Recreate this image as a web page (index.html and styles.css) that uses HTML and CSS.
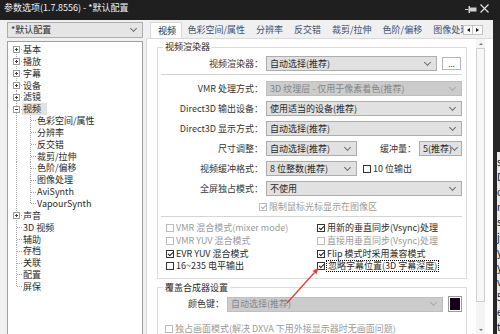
FILE: index.html
```html
<!DOCTYPE html>
<html>
<head>
  <meta charset="utf-8">
  <title>参数选项</title>
  <link rel="stylesheet" href="styles.css">
</head>
<body>
  <div class="titlebar">
    <span class="title">参数选项(1.7.8556) - *默认配置</span>
    <svg class="pin" width="12" height="8" viewBox="0 0 12 8">
      <path d="M0 4.5H3.5" stroke="#d0d0d0" stroke-width="1"/>
      <rect x="3.5" y="1" width="1.5" height="7" fill="#d0d0d0"/>
      <rect x="5" y="2.5" width="6.5" height="4" fill="#d0d0d0"/>
    </svg>
    <svg class="close" width="9" height="9" viewBox="0 0 9 9">
      <path d="M0.5 0.5L8.5 8.5M8.5 0.5L0.5 8.5" stroke="#e0e0e0" stroke-width="1.2"/>
    </svg>
  </div>

  <div class="main">
    <!-- profile list + category tree -->
    <div class="sidebar">
      <div class="combo profile">*默认配置</div>
      <div class="tree">
        <div class="node"><i class="g top"><b class="exp"></b></i>基本</div>
        <div class="node"><i class="g mid"><b class="exp"></b></i>播放</div>
        <div class="node"><i class="g mid"><b class="exp"></b></i>字幕</div>
        <div class="node"><i class="g mid"><b class="exp"></b></i>设备</div>
        <div class="node"><i class="g mid"><b class="exp"></b></i>滤镜</div>
        <div class="node"><i class="g mid"><b class="exp open"></b></i><span class="sel">视频</span></div>
        <div class="node"><i class="g pipe"></i><i class="g mid"></i>色彩空间/属性</div>
        <div class="node"><i class="g pipe"></i><i class="g mid"></i>分辨率</div>
        <div class="node"><i class="g pipe"></i><i class="g mid"></i>反交错</div>
        <div class="node"><i class="g pipe"></i><i class="g mid"></i>裁剪/拉伸</div>
        <div class="node"><i class="g pipe"></i><i class="g mid"></i>色阶/偏移</div>
        <div class="node"><i class="g pipe"></i><i class="g mid"></i>图像处理</div>
        <div class="node"><i class="g pipe"></i><i class="g mid"></i>AviSynth</div>
        <div class="node"><i class="g pipe"></i><i class="g end"></i>VapourSynth</div>
        <div class="node"><i class="g mid"><b class="exp"></b></i>声音</div>
        <div class="node"><i class="g mid"></i>3D 视频</div>
        <div class="node"><i class="g mid"></i>辅助</div>
        <div class="node"><i class="g mid"></i>存档</div>
        <div class="node"><i class="g mid"></i>关联</div>
        <div class="node"><i class="g mid"></i>配置</div>
        <div class="node"><i class="g end"></i>屏保</div>
      </div>
    </div>

    <!-- tab control -->
    <div class="pages">
      <div class="tabs">
        <div class="tab-strip">
          <span class="tab active">视频</span>
          <span class="tab">色彩空间/属性</span>
          <span class="tab">分辨率</span>
          <span class="tab">反交错</span>
          <span class="tab">裁剪/拉伸</span>
          <span class="tab">色阶/偏移</span>
          <span class="tab">图像处理</span>
        </div>
        <div class="tab-arrows">
          <span class="tab-arrow left"></span>
          <span class="tab-arrow right"></span>
        </div>
      </div>

      <div class="page">
        <div class="page-body">
          <fieldset class="group">
            <legend>视频渲染器</legend>
            <div class="row first">
              <span class="lbl">视频渲染器：</span>
              <span class="combo w-main">自动选择(推荐)</span>
              <span class="dots">...</span>
            </div>
            <div class="sep"></div>
            <div class="row">
              <span class="lbl">VMR 处理方式：</span>
              <span class="combo off w-full">3D 纹理层 - 仅用于像素着色(推荐)</span>
            </div>
            <div class="row">
              <span class="lbl">Direct3D 输出设备：</span>
              <span class="combo w-full">使用适当的设备(推荐)</span>
            </div>
            <div class="row">
              <span class="lbl">Direct3D 显示方式：</span>
              <span class="combo w-full">自动选择(推荐)</span>
            </div>
            <div class="row">
              <span class="lbl">尺寸调整：</span>
              <span class="combo w-short">自动选择(推荐)</span>
              <span class="lbl2">缓冲量：</span>
              <span class="combo w-tiny">5(推荐)</span>
            </div>
            <div class="row">
              <span class="lbl">视频缓冲格式：</span>
              <span class="combo w-short">8 位整数(推荐)</span>
              <span class="chk inline"><i class="box"></i>10 位输出</span>
            </div>
            <div class="row">
              <span class="lbl">全屏独占模式：</span>
              <span class="combo w-full">不使用</span>
            </div>
            <div class="chk off limit"><i class="box on"></i>限制鼠标光标显示在图像区</div>
            <div class="sep low"></div>
            <div class="opts">
              <div class="chk off"><i class="box"></i>VMR 混合模式(mixer mode)</div>
              <div class="chk"><i class="box on"></i>用新的垂直同步(Vsync)处理</div>
              <div class="chk off"><i class="box"></i>VMR YUV 混合模式</div>
              <div class="chk off"><i class="box"></i>直接用垂直同步(Vsync)处理</div>
              <div class="chk"><i class="box on"></i>EVR YUV 混合模式</div>
              <div class="chk"><i class="box on"></i>Flip 模式时采用兼容模式</div>
              <div class="chk"><i class="box"></i>16~235 电平输出</div>
              <div class="chk"><i class="box on"></i><span class="focus">忽略字幕位置(3D 字幕深度)</span></div>
            </div>
          </fieldset>

          <fieldset class="group">
            <legend>覆盖合成器设置</legend>
            <div class="row first color-row">
              <span class="lbl short">颜色键：</span>
              <span class="combo off w-key">自动选择(推荐)</span>
              <span class="swatch"></span>
            </div>
            <div class="chk off exclusive"><i class="box"></i>独占画面模式(解决 DXVA 下用外接显示器时无画面问题)</div>
          </fieldset>
        </div>

        <div class="vscroll">
          <span class="sb-btn up"></span>
          <span class="sb-thumb"></span>
          <span class="sb-track"></span>
          <span class="sb-btn down"></span>
        </div>
        <div class="page-rest"></div>
      </div>
    </div>

    <!-- window behind the dialog -->
    <div class="behind">
      <div class="behind-doc">sy<br>Di<br>op<br>na<br>se<br>ju<br>yo<br>yo<br>vy<br>5c<br>en<br>ty</div>
    </div>
  </div>

  <svg class="arrow" width="45" height="46" viewBox="0 0 45 46">
    <path d="M7 41L34.5 10.5" stroke="#e53a3a" stroke-width="1.3"/>
    <polygon points="38.5,6 36.4,12.2 32.6,8.8" fill="#e53a3a"/>
  </svg>
</body>
</html>
```

FILE: styles.css
```css
* {
  box-sizing: border-box;
}
body {
  margin: 0;
  width: 500px;
  height: 334px;
  overflow: hidden;
  position: relative;
  background: #f0f0f0;
  color: #2a2a2a;
  font-family: "Noto Sans CJK SC", "Noto Sans", sans-serif;
  font-size: 9px;
  line-height: 12px;
}

/* title bar */
.titlebar {
  height: 20px;
  display: flex;
  align-items: flex-start;
  padding: 2px 11px 0 4px;
  background: #1f1f1f;
  color: #f2f2f2;
}
.titlebar .title {
  flex: 1;
}
.pin {
  margin: 3px 3px 0 0;
}
.close {
  margin-top: 2px;
}

.main {
  display: flex;
  height: 314px;
}

/* left side */
.sidebar {
  width: 146px;
  flex: none;
  display: flex;
  flex-direction: column;
  gap: 3px;
  padding: 2px 3px 0 7px;
}
.combo {
  flex: none;
  height: 15px;
  display: flex;
  align-items: center;
  padding-left: 3px;
  background: #e1e1e1;
  border: 1px solid #adadad;
  white-space: nowrap;
  overflow: hidden;
}
.combo::after {
  content: "";
  flex: none;
  width: 4px;
  height: 4px;
  margin: -3px 6px 0 auto;
  border-right: 1px solid #6f6f6f;
  border-bottom: 1px solid #6f6f6f;
  transform: rotate(45deg);
}
.combo.off {
  background: #cccccc;
  border-color: #bfbfbf;
  color: #868686;
}
.combo.off::after {
  border-color: #a9a9a9;
}
.profile {
  height: 16px;
  background: #e5e5e5;
}
.tree {
  flex: 1;
  background: #fff;
  border: 1px solid #a0a0a0;
  border-bottom: none;
  padding: 2px 0 0 1px;
}
.node {
  display: flex;
  height: 11.85px;
  line-height: 11.85px;
  white-space: nowrap;
}
.g {
  flex: none;
  width: 14px;
  display: flex;
  align-items: center;
  --dots-v: repeating-linear-gradient(to bottom, #a5a5a5 0 1px, transparent 1px 2px);
  --dots-h: repeating-linear-gradient(to right, #a5a5a5 0 1px, transparent 1px 2px);
}
.g.top {
  background: var(--dots-v) 7px 100% / 1px 50% no-repeat, var(--dots-h) 8px 50% / 6px 1px no-repeat;
}
.g.mid {
  background: var(--dots-v) 7px 0 / 1px 100% no-repeat, var(--dots-h) 8px 50% / 6px 1px no-repeat;
}
.g.end {
  background: var(--dots-v) 7px 0 / 1px 50% no-repeat, var(--dots-h) 8px 50% / 6px 1px no-repeat;
}
.g.pipe {
  background: var(--dots-v) 7px 0 / 1px 100% no-repeat;
}
.exp {
  width: 7px;
  height: 7px;
  margin-left: 4px;
  border: 1px solid #9a9a9a;
  background: linear-gradient(#404040, #404040) center / 3px 1px no-repeat,
    linear-gradient(#404040, #404040) center / 1px 3px no-repeat, #fff;
}
.exp.open {
  background: linear-gradient(#404040, #404040) center / 3px 1px no-repeat, #fff;
}
.sel {
  background: #e2e2e2;
  padding: 0 6px 0 1px;
  margin-left: -1px;
}

/* tabs */
.pages {
  width: 347px;
  flex: none;
  display: flex;
  flex-direction: column;
}
.tabs {
  height: 18px;
  display: flex;
  align-items: flex-end;
}
.tab-strip {
  width: 317px;
  flex: none;
  display: flex;
  align-items: flex-end;
  overflow: hidden;
  padding-left: 4px;
}
.tab {
  flex: none;
  height: 16px;
  line-height: 16px;
  padding: 0 5.5px;
  color: #3d5170;
  white-space: nowrap;
}
.tab.active {
  position: relative;
  z-index: 1;
  height: 17px;
  line-height: 15px;
  margin-bottom: -1px;
  padding: 0 5px 0 7px;
  background: #fff;
  border: 1px solid #d9d9d9;
  border-bottom: none;
  color: #2a2a2a;
}
.tab-arrows {
  display: flex;
  margin-bottom: 3px;
}
.tab-arrow {
  width: 10px;
  height: 10px;
  display: flex;
  align-items: center;
  justify-content: center;
  background: #fafafa;
  border: 1px solid #c4c4c4;
}
.tab-arrow + .tab-arrow {
  border-left: none;
}
.tab-arrow::before {
  content: "";
  border-top: 2.5px solid transparent;
  border-bottom: 2.5px solid transparent;
}
.tab-arrow.left::before {
  border-right: 3px solid #111;
}
.tab-arrow.right::before {
  border-left: 3px solid #111;
}

/* page */
.page {
  flex: 1;
  display: flex;
  background: #fff;
  border-top: 1px solid #d9d9d9;
  border-left: 1px solid #d9d9d9;
  min-height: 0;
}
.page-body {
  width: 329px;
  flex: none;
  padding: 2px 9px 0 10px;
  overflow: hidden;
}
.group {
  margin: 0;
  padding: 0 0 5px;
  min-width: 0;
  border: 1px solid #dcdcdc;
}
.group + .group {
  margin-top: 3px;
}
.group legend {
  margin-left: 5px;
  padding: 0 2px;
  line-height: 12px;
}
.row {
  display: flex;
  align-items: center;
  height: 15px;
  margin-top: 5px;
}
.row.first {
  margin-top: 3px;
}
.lbl {
  flex: none;
  width: 105px;
  margin-right: 3px;
  text-align: right;
  color: #333;
  white-space: nowrap;
}
.lbl.short {
  width: 66px;
}
.lbl2 {
  flex: none;
  width: 59px;
  margin-right: 3px;
  text-align: right;
  color: #333;
}
.w-main { width: 171px; }
.w-full { width: 196px; }
.w-short { width: 91px; }
.w-tiny { width: 43px; }
.w-key { width: 216px; }
.dots {
  width: 19px;
  height: 13px;
  margin-left: 5px;
  background: #fdfdfd;
  border: 1px solid #b4b4b4;
  text-align: center;
  line-height: 12px;
  font-size: 8px;
}
.sep {
  border-top: 1px solid #d5d5d5;
  margin: 3px 4px 6px 3px;
}
.sep.low {
  margin-bottom: 5px;
}

/* checkboxes */
.chk {
  display: flex;
  align-items: center;
  height: 12.67px;
  white-space: nowrap;
}
.chk.off {
  color: #9a9a9a;
}
.box {
  flex: none;
  width: 8px;
  height: 8px;
  margin-right: 2px;
  display: flex;
  justify-content: center;
  background: #fff;
  border: 1px solid #333;
}
.chk.off .box {
  border-color: #bcbcbc;
}
.box.on::after {
  content: "";
  width: 2px;
  height: 4px;
  border-right: 1px solid #222;
  border-bottom: 1px solid #222;
  transform: rotate(45deg);
}
.chk.off .box.on::after {
  border-color: #b0b0b0;
}
.chk.inline {
  margin-left: 6px;
  color: #333;
}
.chk.limit {
  height: 12px;
  margin: 5px 0 0 101px;
}
.opts {
  display: grid;
  grid-template-columns: 151px 1fr;
  grid-auto-rows: 12.67px;
  padding-left: 8px;
}
.focus {
  margin-left: -1px;
  padding: 0 1px;
  line-height: 10px;
  border: 1px dotted #000;
}
.color-row {
  margin-top: 2px;
}
.swatch {
  flex: none;
  width: 14px;
  height: 16px;
  margin-left: 5px;
  border: 1px solid #9a9a9a;
  background: #14001a;
  box-shadow: inset 0 0 0 1px #fff;
}
.chk.exclusive {
  height: 12px;
  margin: 11px 0 0 7px;
}

/* scrollbar */
.vscroll {
  width: 9px;
  flex: none;
  display: flex;
  flex-direction: column;
  background: #f4f4f4;
}
.sb-btn {
  height: 9px;
  display: flex;
  align-items: center;
  justify-content: center;
}
.sb-btn::before {
  content: "";
  border-left: 2px solid transparent;
  border-right: 2px solid transparent;
}
.sb-btn.up::before {
  border-bottom: 2px solid #777;
}
.sb-btn.down::before {
  border-top: 2px solid #777;
}
.sb-thumb {
  height: 254px;
  background: #f7f7f7;
  border: 1px solid #cfcfcf;
}
.sb-track {
  flex: 1;
}
.page-rest {
  flex: 1;
}

/* window behind the dialog */
.behind {
  width: 7px;
  flex: none;
  display: flex;
  flex-direction: column;
  background: #262626;
  overflow: hidden;
}
.behind-doc {
  flex: 1;
  margin: 132px 0 0 4px;
  padding-top: 2px;
  background: #e9e9e9;
  color: #222;
  font-size: 10px;
  line-height: 15px;
  white-space: nowrap;
}

/* annotation arrow */
.arrow {
  position: absolute;
  left: 280px;
  top: 262px;
}
```
